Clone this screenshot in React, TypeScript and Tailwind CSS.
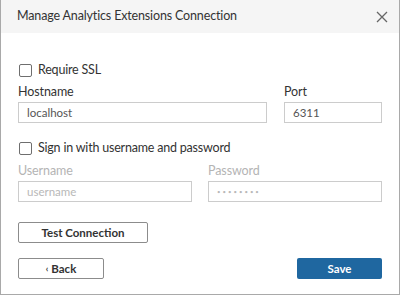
import React from 'react';

function Checkbox({ label }: { label: string }) {
  return (
    <label className="flex items-center gap-[6px] h-[14px]">
      <span className="w-[13px] h-[13px] border border-[#6e6e6e] rounded-[2px] bg-white" />
      <span className="text-[12.5px] tracking-[-0.2px] text-[#333]">{label}</span>
    </label>
  );
}

function Field({
  label,
  value,
  width,
  disabled,
  secret,
}: {
  label: string;
  value: string;
  width: string;
  disabled?: boolean;
  secret?: boolean;
}) {
  return (
    <div className={`flex flex-col ${width}`}>
      <span className={`text-[12.5px] leading-[16px] tracking-[-0.1px] ${disabled ? 'text-[#b4b4b4]' : 'text-[#333]'}`}>
        {label}
      </span>
      <div
        className={`mt-[2px] h-[21px] border border-[#cccccc] flex items-center px-[8px] ${
          secret ? 'text-[6px] tracking-[2px]' : 'text-[11.5px]'
        } ${disabled ? 'text-[#b8b8b8]' : 'text-[#555]'}`}
      >
        {value}
      </div>
    </div>
  );
}

export default function App() {
  return (
    <div
      className="w-[400px] h-[295px] bg-white border-l border-r border-b border-[#a9a9a9] flex flex-col"
      style={{ fontFamily: 'Lato, "Noto Sans", sans-serif' }}
    >
      {/* Header */}
      <div className="h-[33px] bg-[#f5f5f5] flex items-center justify-between pl-[16px] pr-[11px]">
        <span className="text-[12.5px] tracking-[-0.15px] text-[#333]">Manage Analytics Extensions Connection</span>
        <svg width="12" height="12" viewBox="0 0 12 12" className="text-[#666]">
          <path d="M1 1 L11 11 M11 1 L1 11" stroke="currentColor" strokeWidth="1.3" />
        </svg>
      </div>

      {/* Body */}
      <div className="flex flex-col px-[17px]">
        <div className="mt-[30px] pl-[1px]">
          <Checkbox label="Require SSL" />
        </div>

        <div className="mt-[7px] flex justify-between">
          <Field label="Hostname" value="localhost" width="w-[249px]" />
          <Field label="Port" value="6311" width="w-[98px]" />
        </div>

        <div className="mt-[18px] pl-[1px]">
          <Checkbox label="Sign in with username and password" />
        </div>

        <div className="mt-[8px] flex justify-between">
          <Field label="Username" value="username" width="w-[174px]" disabled />
          <Field label="Password" value="••••••••" width="w-[174px]" disabled secret />
        </div>

        <button className="mt-[20px] w-[130px] h-[21px] border border-[#8c8c8c] rounded-[2px] text-[11.5px] font-bold text-[#333] flex items-center justify-center">
          Test Connection
        </button>

        <div className="mt-[15px] flex justify-between">
          <button className="w-[86px] h-[21px] border border-[#8c8c8c] rounded-[2px] text-[11.5px] font-bold text-[#333] flex items-center justify-center gap-[3px]">
            <span className="text-[9px]">‹</span>Back
          </button>
          <button className="w-[85px] h-[21px] bg-[#1f67a0] rounded-[2px] text-[11.5px] font-bold text-white flex items-center justify-center">
            Save
          </button>
        </div>
      </div>
    </div>
  );
}
